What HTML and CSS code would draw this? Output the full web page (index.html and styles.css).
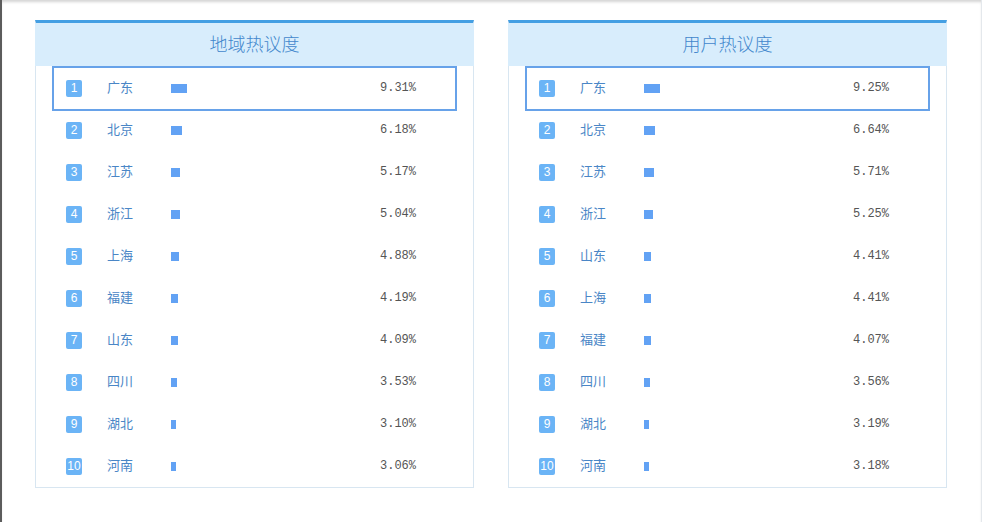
FILE: index.html
```html
<!DOCTYPE html>
<html lang="zh-CN">
<head>
	<meta charset="UTF-8">
	<title>热议度排行</title>
	<link rel="stylesheet" href="styles.css">
</head>
<body>
	<div class="page">
		<div class="panel">
			<div class="panel-title">地域热议度</div>
			<ul class="rank-list">
				<li class="rank-item on"><span class="rank-num">1</span><span class="rank-name">广东</span><span class="rank-bar"><i style="width:16px"></i></span><span class="rank-pct">9.31%</span></li>
				<li class="rank-item"><span class="rank-num">2</span><span class="rank-name">北京</span><span class="rank-bar"><i style="width:11px"></i></span><span class="rank-pct">6.18%</span></li>
				<li class="rank-item"><span class="rank-num">3</span><span class="rank-name">江苏</span><span class="rank-bar"><i style="width:9px"></i></span><span class="rank-pct">5.17%</span></li>
				<li class="rank-item"><span class="rank-num">4</span><span class="rank-name">浙江</span><span class="rank-bar"><i style="width:9px"></i></span><span class="rank-pct">5.04%</span></li>
				<li class="rank-item"><span class="rank-num">5</span><span class="rank-name">上海</span><span class="rank-bar"><i style="width:8px"></i></span><span class="rank-pct">4.88%</span></li>
				<li class="rank-item"><span class="rank-num">6</span><span class="rank-name">福建</span><span class="rank-bar"><i style="width:7px"></i></span><span class="rank-pct">4.19%</span></li>
				<li class="rank-item"><span class="rank-num">7</span><span class="rank-name">山东</span><span class="rank-bar"><i style="width:7px"></i></span><span class="rank-pct">4.09%</span></li>
				<li class="rank-item"><span class="rank-num">8</span><span class="rank-name">四川</span><span class="rank-bar"><i style="width:6px"></i></span><span class="rank-pct">3.53%</span></li>
				<li class="rank-item"><span class="rank-num">9</span><span class="rank-name">湖北</span><span class="rank-bar"><i style="width:5px"></i></span><span class="rank-pct">3.10%</span></li>
				<li class="rank-item"><span class="rank-num">10</span><span class="rank-name">河南</span><span class="rank-bar"><i style="width:5px"></i></span><span class="rank-pct">3.06%</span></li>
			</ul>
		</div>

		<div class="panel">
			<div class="panel-title">用户热议度</div>
			<ul class="rank-list">
				<li class="rank-item on"><span class="rank-num">1</span><span class="rank-name">广东</span><span class="rank-bar"><i style="width:16px"></i></span><span class="rank-pct">9.25%</span></li>
				<li class="rank-item"><span class="rank-num">2</span><span class="rank-name">北京</span><span class="rank-bar"><i style="width:11px"></i></span><span class="rank-pct">6.64%</span></li>
				<li class="rank-item"><span class="rank-num">3</span><span class="rank-name">江苏</span><span class="rank-bar"><i style="width:10px"></i></span><span class="rank-pct">5.71%</span></li>
				<li class="rank-item"><span class="rank-num">4</span><span class="rank-name">浙江</span><span class="rank-bar"><i style="width:9px"></i></span><span class="rank-pct">5.25%</span></li>
				<li class="rank-item"><span class="rank-num">5</span><span class="rank-name">山东</span><span class="rank-bar"><i style="width:7px"></i></span><span class="rank-pct">4.41%</span></li>
				<li class="rank-item"><span class="rank-num">6</span><span class="rank-name">上海</span><span class="rank-bar"><i style="width:7px"></i></span><span class="rank-pct">4.41%</span></li>
				<li class="rank-item"><span class="rank-num">7</span><span class="rank-name">福建</span><span class="rank-bar"><i style="width:7px"></i></span><span class="rank-pct">4.07%</span></li>
				<li class="rank-item"><span class="rank-num">8</span><span class="rank-name">四川</span><span class="rank-bar"><i style="width:6px"></i></span><span class="rank-pct">3.56%</span></li>
				<li class="rank-item"><span class="rank-num">9</span><span class="rank-name">湖北</span><span class="rank-bar"><i style="width:5px"></i></span><span class="rank-pct">3.19%</span></li>
				<li class="rank-item"><span class="rank-num">10</span><span class="rank-name">河南</span><span class="rank-bar"><i style="width:5px"></i></span><span class="rank-pct">3.18%</span></li>
			</ul>
		</div>
	</div>
</body>
</html>
```

FILE: styles.css
```css
html, body {
	margin: 0;
	padding: 0;
	height: 100%;
}
body {
	background: #fff;
	border-left: 2px solid #5c5c5c;
	border-right: 1px solid #e4e8ec;
	box-sizing: border-box;
	box-shadow: inset 0 3px 3px -1px #d4d4d4;
	font-family: "Noto Sans CJK SC", "Noto Sans", sans-serif;
}
.page {
	display: flex;
	gap: 34px;
	padding: 20px 0 0 33px;
}
.panel {
	width: 439px;
	box-sizing: border-box;
	border: 1px solid #d8e6f1;
	border-top: 3px solid #449fe3;
}
.panel-title {
	height: 43px;
	line-height: 41px;
	background: #d8edfc;
	color: #4287cc;
	font-size: 18px;
	font-weight: 300;
	text-align: center;
	margin: 0 -1px;
}
.rank-list {
	list-style: none;
	margin: 0;
	padding: 1px 16px 0;
}
.rank-item {
	position: relative;
	display: flex;
	align-items: center;
	height: 42px;
	padding: 0 41px 0 14px;
}
.rank-item.on::after {
	content: "";
	position: absolute;
	left: 0;
	right: 0;
	top: -1px;
	bottom: -2px;
	border: 2px solid #67a2e9;
}
.rank-num {
	width: 16px;
	height: 17px;
	line-height: 17px;
	border-radius: 2px;
	background: #6bb4f6;
	color: #fff;
	font-family: "Liberation Sans", Arial, sans-serif;
	font-size: 12px;
	text-align: center;
}
.rank-name {
	width: 64px;
	margin-left: 25px;
	padding-bottom: 3px;
	color: #4a86c6;
	font-size: 13px;
}
.rank-bar {
	flex: 1;
	display: flex;
}
.rank-bar i {
	display: block;
	height: 9px;
	background: #62a2f4;
}
.rank-pct {
	color: #555;
	font-family: "Liberation Mono", monospace;
	font-size: 12px;
}
```
